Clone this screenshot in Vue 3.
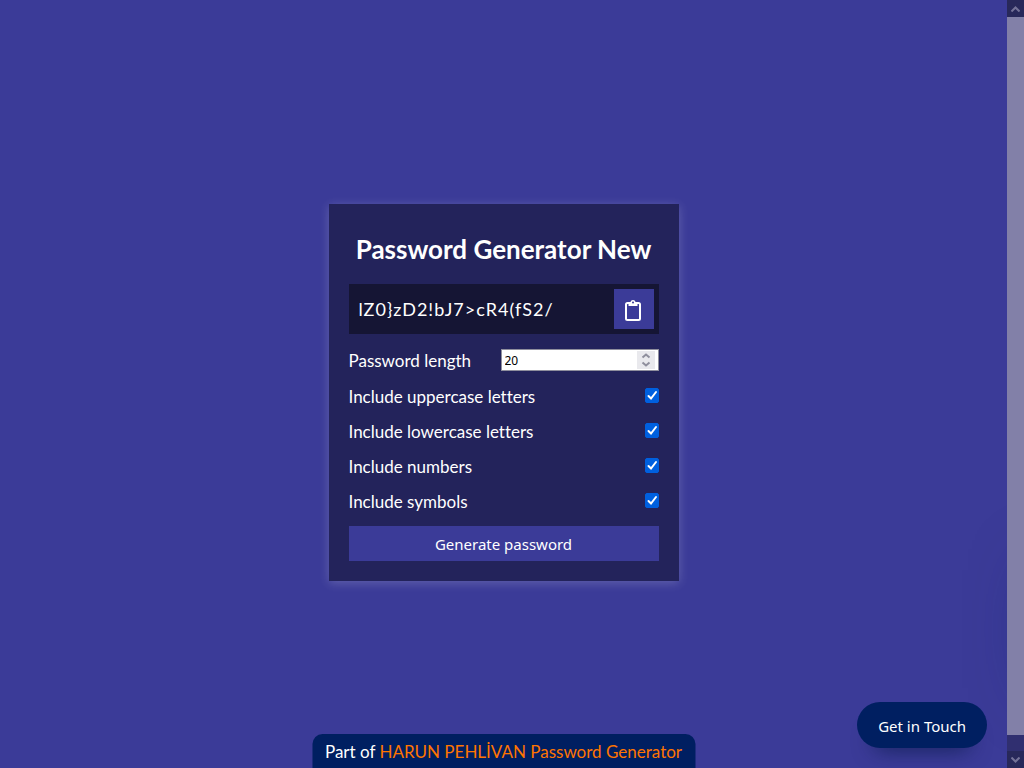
<script setup>
import { ref } from 'vue'

const password = ref('lZ0}zD2!bJ7>cR4(fS2/')
const length = ref(20)
const options = ref([
  { id: 'uppercase', label: 'Include uppercase letters', on: true, chars: 'ABCDEFGHIJKLMNOPQRSTUVWXYZ' },
  { id: 'lowercase', label: 'Include lowercase letters', on: true, chars: 'abcdefghijklmnopqrstuvwxyz' },
  { id: 'numbers', label: 'Include numbers', on: true, chars: '0123456789' },
  { id: 'symbols', label: 'Include symbols', on: true, chars: '!@#$%^&*(){}[]=<>/,.' },
])

function generate() {
  const sets = options.value.filter((o) => o.on)
  let out = ''
  for (let i = 0; sets.length && i < length.value; i++) {
    const { chars } = sets[i % sets.length]
    out += chars[Math.floor(Math.random() * chars.length)]
  }
  password.value = out
}

function copy() {
  navigator.clipboard?.writeText(password.value)
}
</script>

<template>
  <div class="page">
    <div class="stage">
      <main class="card">
        <h1 class="title">Password Generator New</h1>
        <div class="result">
          <span class="password">{{ password }}</span>
          <button class="copy" type="button" aria-label="Copy password" @click="copy">
            <svg width="16" height="22" viewBox="0 0 16 22" aria-hidden="true">
              <rect x="1" y="4" width="14" height="17" rx="1.500" fill="none" stroke="#fff" stroke-width="2" />
              <path d="M3.500 3.500h2a2.500 2.500 0 0 1 5 0h2V7h-9z" fill="#fff" />
              <circle cx="8" cy="3.500" r="1" fill="#3b3b98" />
            </svg>
          </button>
        </div>
        <div class="row">
          <label for="length">Password length</label>
          <span class="number">
            <input id="length" v-model="length" type="number" min="4" max="20" />
            <span class="spinner" aria-hidden="true">
              <svg width="10" height="14" viewBox="0 0 10 14">
                <path d="M1.500 4.500 5 1.500 8.500 4.500M1.500 9.500 5 12.500 8.500 9.500" fill="none" stroke="#8f8f9d" stroke-width="2" />
              </svg>
            </span>
          </span>
        </div>
        <div v-for="o in options" :key="o.id" class="row">
          <label :for="o.id">{{ o.label }}</label>
          <span class="tick">
            <input :id="o.id" v-model="o.on" type="checkbox" />
            <svg v-if="o.on" width="14" height="15" viewBox="0 0 14 15" aria-hidden="true">
              <path d="M3.500 8 6 10.500 11 4" fill="none" stroke="#fff" stroke-width="2" stroke-linecap="round" />
            </svg>
          </span>
        </div>
        <button class="generate" type="button" @click="generate">Generate password</button>
      </main>

      <div class="drawer" aria-hidden="true"></div>
      <button class="touch" type="button">Get in Touch</button>
      <footer class="footer">Part of <a href="#">HARUN PEHLİVAN Password Generator</a></footer>
    </div>

    <div class="scrollbar" aria-hidden="true">
      <span class="arrow">
        <svg width="9" height="6" viewBox="0 0 9 6"><path d="M.5 5.500l4-4 4 4" /></svg>
      </span>
      <span class="thumb"></span>
      <span class="arrow">
        <svg width="9" height="6" viewBox="0 0 9 6"><path d="M.5.500l4 4 4-4" /></svg>
      </span>
    </div>
  </div>
</template>

<style>
body {
  margin: 0;
  background: #3b3b98;
}
</style>

<style scoped>
* {
  box-sizing: border-box;
}
.page {
  display: flex;
  min-height: 100vh;
  color: #fff;
  font: 16px/20px Lato, "Open Sans", sans-serif;
  font-variant-ligatures: none;
}
.stage {
  position: relative;
  flex: 1;
  display: flex;
  align-items: center;
  justify-content: center;
  padding: 17px 0 0;
  overflow: hidden;
  background: #3b3b98;
}
.card {
  display: flex;
  flex-direction: column;
  gap: 15px;
  width: 350px;
  max-width: 100%;
  padding: 20px;
  background: #23235b;
  box-shadow: 0 2px 10px rgba(255, 255, 255, 0.2);
}
.title {
  margin: 10px 0 5px;
  font-size: 26px;
  line-height: 30px;
  font-weight: 700;
  text-align: center;
  white-space: nowrap;
}
.result {
  display: flex;
  align-items: center;
  justify-content: space-between;
  height: 50px;
  padding: 5px 5px 5px 10px;
  background: #151534;
}
.password {
  font-size: 18px;
  letter-spacing: 1px;
}
button {
  border: 0;
  color: #fff;
  cursor: pointer;
  font: 15px/20px "Noto Sans", sans-serif;
}
.copy {
  display: grid;
  place-items: center;
  width: 40px;
  height: 40px;
  padding: 2px 1px 0 0;
  background: #3b3b98;
}
.row {
  display: flex;
  align-items: center;
  justify-content: space-between;
}
.row label {
  padding-top: 2px;
  font-size: 17px;
  line-height: 18px;
}
.number {
  position: relative;
  display: flex;
}
.number input {
  width: 158px;
  height: 22px;
  padding: 1px 3px;
  border: 1px solid #8f8f9d;
  background: #fff;
  color: #000;
  font: 12px "Noto Sans", sans-serif;
  appearance: textfield;
}
.number input::-webkit-inner-spin-button {
  appearance: none;
}
.spinner {
  position: absolute;
  top: 2px;
  right: 4px;
  display: grid;
  place-items: center;
  width: 18px;
  height: 18px;
  background: #e9e9ed;
  pointer-events: none;
}
.tick {
  position: relative;
  display: flex;
  width: 14px;
  height: 16px;
}
.tick input {
  width: 14px;
  height: 15px;
  margin: 0;
  border: 1px solid #8f8f9d;
  border-radius: 2px;
  appearance: none;
  background: #fff;
}
.tick input:checked {
  border-color: #0060df;
  background: #0060df;
}
.tick svg {
  position: absolute;
  top: 0;
  left: 0;
  pointer-events: none;
}
.generate {
  height: 35px;
  padding: 0;
  background: #3b3b98;
}
.drawer {
  position: absolute;
  bottom: 80px;
  left: 100%;
  width: 300px;
  height: 150px;
  margin-left: 16px;
  border-radius: 16px;
  box-shadow: 0 16px 64px -16px rgba(0, 31, 97, 0.5);
}
.touch {
  position: absolute;
  right: 20px;
  bottom: 20px;
  padding: 14px 21px 12px;
  border-radius: 23px;
  background: #001f61;
  box-shadow: 0 16px 22px -17px #03153b;
}
.footer {
  position: absolute;
  bottom: 0;
  left: 50%;
  padding: 8px 13px 6px;
  border-radius: 10px 10px 0 0;
  background: #001f61;
  font-size: 17px;
  white-space: nowrap;
  transform: translateX(-50%);
}
.footer a {
  color: #ff7500;
  text-decoration: none;
}
.scrollbar {
  display: flex;
  flex-direction: column;
  width: 17px;
  background: #302f70;
}
.arrow {
  display: grid;
  place-items: center;
  height: 17px;
  background: #28285a;
}
.arrow path {
  fill: none;
  stroke: #747298;
  stroke-width: 2;
}
.thumb {
  flex: 1;
  margin-bottom: 16px;
  background: #8280a8;
}
</style>
